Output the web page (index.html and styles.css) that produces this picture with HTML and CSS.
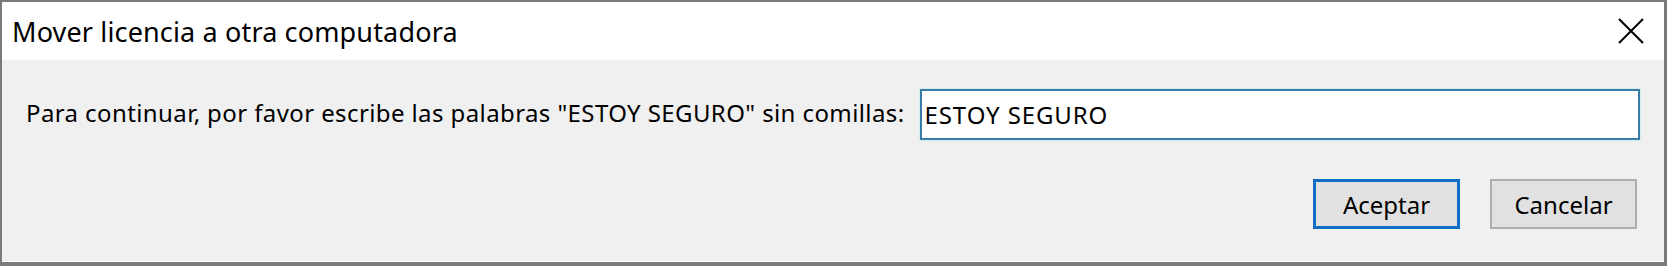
FILE: index.html
```html
<!DOCTYPE html>
<html lang="es">
<head>
    <meta charset="UTF-8">
    <meta name="viewport" content="width=device-width, initial-scale=1.0">
    <title>Mover licencia a otra computadora</title>
    <link rel="stylesheet" href="styles.css">
</head>
<body>

<div class="window">
    <div class="titlebar">
        <span class="title">Mover licencia a otra computadora</span>
        <span class="close-btn" title="Cerrar">
            <svg width="26" height="26" viewBox="0 0 26 26">
                <path d="M1 1 L25 25 M25 1 L1 25" stroke="#000" stroke-width="2" fill="none"/>
            </svg>
        </span>
    </div>

    <div class="dialog-body">
        <form id="confirmForm" onsubmit="event.preventDefault();">
            <div class="field-row">
                <label for="confirmText">Para continuar, por favor escribe las palabras "ESTOY SEGURO" sin comillas:</label>
                <input type="text" class="input-field" id="confirmText" value="ESTOY SEGURO">
            </div>
            <div class="button-row">
                <button type="submit" class="btn btn-default">Aceptar</button>
                <button type="button" class="btn">Cancelar</button>
            </div>
        </form>
    </div>
</div>

</body>
</html>
```

FILE: styles.css
```css
body {
    margin: 0;
    font-family: "Noto Sans", "Open Sans", sans-serif;
    color: #000;
}
.window {
    width: 1667px;
    height: 266px;
    box-sizing: border-box;
    border-style: solid;
    border-color: #7a7a7a;
    border-width: 2px 3px 4px 2px;
    display: flex;
    flex-direction: column;
    background-color: #f0f0f0;
}
.titlebar {
    height: 58px;
    background-color: #fff;
    display: flex;
    align-items: center;
    justify-content: space-between;
    padding: 0 20px 0 10px;
}
.title {
    font-size: 27px;
    letter-spacing: 0.15px;
}
.close-btn {
    display: flex;
    cursor: pointer;
}
.dialog-body {
    flex: 1;
    padding: 29px 24px 0 24px;
    border-bottom: 1px solid #fff;
}
.field-row {
    display: flex;
    align-items: center;
    gap: 15px;
}
.field-row label {
    font-size: 24px;
    letter-spacing: 0.4px;
    white-space: nowrap;
    padding-bottom: 4px;
}
.input-field {
    flex: 1;
    min-width: 0;
    height: 51px;
    box-sizing: border-box;
    border: 2px solid #3a7ca5;
    box-shadow: 0 0 2px #9fe3f0;
    background-color: #fff;
    padding: 0 3px;
    font-family: "Noto Sans", "Open Sans", sans-serif;
    font-size: 24px;
    letter-spacing: 0.9px;
    color: #000;
    outline: none;
}
.button-row {
    display: flex;
    justify-content: flex-end;
    gap: 30px;
    margin-top: 39px;
    padding-right: 3px;
}
.btn {
    width: 147px;
    height: 50px;
    box-sizing: border-box;
    background-color: #e1e1e1;
    border: 2px solid #adadad;
    font-family: "Noto Sans", "Open Sans", sans-serif;
    font-size: 24px;
    color: #000;
    cursor: pointer;
    padding: 0;
}
.btn-default {
    border: 3px solid #0f6cc7;
}
```
